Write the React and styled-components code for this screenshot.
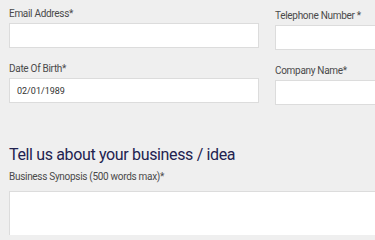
import React from 'react';
import styled, { createGlobalStyle } from 'styled-components';

const GlobalStyle = createGlobalStyle`
  html, body {
    margin: 0;
    padding: 0;
    background: #efefef;
    overflow: hidden;
  }
  body {
    font-family: Roboto, "Liberation Sans", Arial, sans-serif;
  }
`;

const Page = styled.div`
  width: 375px;
  height: 235px;
  padding: 7px 0 0 9px;
  box-sizing: border-box;
  background: #efefef;
  overflow: hidden;
`;

const Grid = styled.div`
  display: grid;
  grid-template-columns: 250px 120px;
  column-gap: 16px;
  row-gap: 8px;
`;

const Field = styled.div`
  display: flex;
  flex-direction: column;
  margin-top: ${({ $shift }) => $shift || 0}px;
`;

const Label = styled.label`
  font-size: 10px;
  line-height: 14px;
  letter-spacing: -0.3px;
  color: #4a4a4a;
  margin-bottom: 2px;
  white-space: nowrap;
`;

const Input = styled.div`
  height: 25px;
  box-sizing: border-box;
  background: #fff;
  border: 1px solid #dcdcdc;
  font-size: 9px;
  color: #333;
  display: flex;
  align-items: center;
  padding-left: 7px;
  margin-bottom: 4px;
`;

const Heading = styled.h2`
  margin: 35px 0 0 0;
  font-weight: 400;
  font-size: 16px;
  line-height: 22px;
  letter-spacing: -0.35px;
  color: #22224f;
`;

const Section = styled.div`
  display: flex;
  flex-direction: column;
  width: 380px;
`;

const SynopsisLabel = styled(Label)`
  margin-top: 4px;
  margin-bottom: 7px;
`;

const TextArea = styled.div`
  height: 60px;
  box-sizing: border-box;
  background: #fff;
  border: 1px solid #dcdcdc;
`;

function FormField({ label, value, shift }) {
  return (
    <Field $shift={shift}>
      <Label>{label}</Label>
      <Input>{value}</Input>
    </Field>
  );
}

export default function App() {
  return (
    <Page>
      <GlobalStyle />
      <Grid>
        <FormField label="Email Address*" />
        <FormField label="Telephone Number *" shift={2} />
        <FormField label="Date Of Birth*" value="02/01/1989" />
        <FormField label="Company Name*" shift={2} />
      </Grid>
      <Section>
        <Heading>Tell us about your business / idea</Heading>
        <SynopsisLabel>Business Synopsis (500 words max)*</SynopsisLabel>
        <TextArea />
      </Section>
    </Page>
  );
}
